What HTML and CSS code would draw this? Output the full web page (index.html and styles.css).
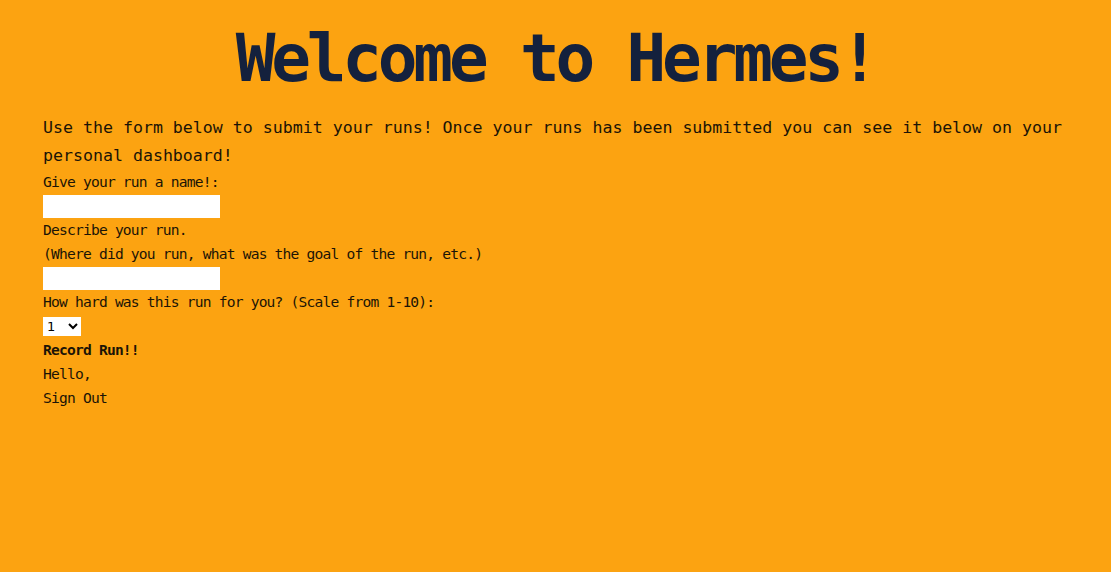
FILE: index.html
```html
<!DOCTYPE html>
<html>
<head>
<meta charset="utf-8">
<title>Hermes</title>
<link rel="stylesheet" href="styles.css">
</head>
<body>
<main class="page">
  <h1 class="title">Welcome to Hermes!</h1>
  <p class="intro">Use the form below to submit your runs! Once your runs has been submitted you can see it below on your personal dashboard!</p>
  <form class="run-form">
    <label class="line" for="name">Give your run a name!:</label>
    <div class="field"><input id="name" class="text-input" type="text"></div>
    <label class="line" for="desc">Describe your run.</label>
    <div class="line">(Where did you run, what was the goal of the run, etc.)</div>
    <div class="field"><input id="desc" class="text-input" type="text"></div>
    <label class="line" for="hard">How hard was this run for you? (Scale from 1-10):</label>
    <div class="field"><select id="hard" class="select">
      <option>1</option><option>2</option><option>3</option><option>4</option><option>5</option>
      <option>6</option><option>7</option><option>8</option><option>9</option><option>10</option>
    </select></div>
    <div class="line bold">Record Run!!</div>
  </form>
  <div class="line">Hello,</div>
  <div class="line">Sign Out</div>
</main>
</body>
</html>
```
FILE: styles.css
```css
html, body {
  margin: 0;
  padding: 0;
  background: #fca311;
  height: 100%;
}
.page {
  padding: 0 43px;
  display: flex;
  flex-direction: column;
  align-items: flex-start;
  color: #1b1406;
}
.title {
  align-self: stretch;
  text-align: center;
  margin: 16px 0 0 0;
  height: 98px;
  line-height: 86px;
  font-family: "DejaVu Sans Mono", monospace;
  font-weight: bold;
  font-size: 66px;
  letter-spacing: -4.2px;
  color: #14213d;
}
.intro {
  margin: 0;
  font-family: "DejaVu Sans Mono", monospace;
  font-size: 16.6px;
  line-height: 28px;
  color: #1b1406;
}
.run-form {
  display: flex;
  flex-direction: column;
  align-items: flex-start;
}
.line {
  font-family: "DejaVu Sans Mono", monospace;
  font-size: 14.6px;
  letter-spacing: -0.8px;
  line-height: 24px;
  height: 24px;
  display: block;
}
.bold {
  font-weight: bold;
}
.field {
  height: 24px;
  display: flex;
  align-items: center;
}
.text-input {
  width: 177px;
  height: 23px;
  box-sizing: border-box;
  border: none;
  background: #fff;
  margin: 0;
  padding: 0 2px;
}
.select {
  width: 38px;
  height: 19px;
  box-sizing: border-box;
  border: none;
  background: #fff;
  margin: 0;
  font-family: "DejaVu Sans", sans-serif;
  font-size: 13px;
}
```
